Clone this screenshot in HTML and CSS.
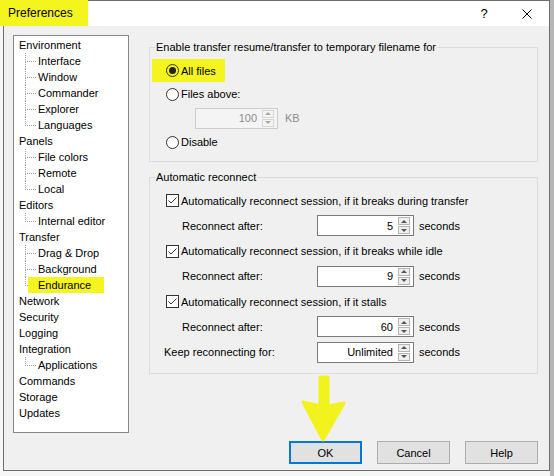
FILE: index.html
```html
<!DOCTYPE html>
<html lang="en">
<head>
    <meta charset="UTF-8">
    <title>Preferences</title>
    <link rel="stylesheet" href="styles.css">
</head>
<body>

<div class="window">
    <div class="titlebar">
        <span class="title mark">Preferences</span>
        <span class="title_help">?</span>
        <span class="title_close">
            <svg width="10" height="10" viewBox="0 0 10 10"><path d="M0.5 0.5 L9.5 9.5 M9.5 0.5 L0.5 9.5" stroke="#000" stroke-width="1" fill="none"/></svg>
        </span>
    </div>

    <div class="client">
        <div class="main">
            <!-- category tree -->
            <ul class="tree">
                <li><span class="tree_label">Environment</span>
                    <ul class="tree_children">
                        <li>Interface</li>
                        <li>Window</li>
                        <li>Commander</li>
                        <li>Explorer</li>
                        <li>Languages</li>
                    </ul>
                </li>
                <li><span class="tree_label">Panels</span>
                    <ul class="tree_children">
                        <li>File colors</li>
                        <li>Remote</li>
                        <li>Local</li>
                    </ul>
                </li>
                <li><span class="tree_label">Editors</span>
                    <ul class="tree_children">
                        <li>Internal editor</li>
                    </ul>
                </li>
                <li><span class="tree_label">Transfer</span>
                    <ul class="tree_children">
                        <li>Drag &amp; Drop</li>
                        <li>Background</li>
                        <li><span class="mark mark_tree">Endurance</span></li>
                    </ul>
                </li>
                <li><span class="tree_label">Network</span></li>
                <li><span class="tree_label">Security</span></li>
                <li><span class="tree_label">Logging</span></li>
                <li><span class="tree_label">Integration</span>
                    <ul class="tree_children">
                        <li>Applications</li>
                    </ul>
                </li>
                <li><span class="tree_label">Commands</span></li>
                <li><span class="tree_label">Storage</span></li>
                <li><span class="tree_label">Updates</span></li>
            </ul>

            <div class="pane">
                <!-- resume options -->
                <fieldset class="group">
                    <legend>Enable transfer resume/transfer to temporary filename for</legend>
                    <div class="group_body group_resume">
                        <div class="option">
                            <span class="mark mark_radio">
                                <svg class="radio" width="13" height="13" viewBox="0 0 13 13"><circle cx="6.5" cy="6.5" r="6" fill="none" stroke="#333"/><circle cx="6.5" cy="6.5" r="3.5" fill="#222"/></svg>
                                All files
                            </span>
                        </div>
                        <div class="option">
                            <svg class="radio" width="13" height="13" viewBox="0 0 13 13"><circle cx="6.5" cy="6.5" r="6" fill="#fff" stroke="#333"/></svg>
                            Files above:
                        </div>
                        <div class="option option_spin">
                            <div class="spin spin_disabled spin_small">
                                <span class="spin_value">100</span>
                                <span class="spin_btns"><i class="spin_up"></i><i class="spin_down"></i></span>
                            </div>
                            <span class="unit unit_disabled">KB</span>
                        </div>
                        <div class="option">
                            <svg class="radio" width="13" height="13" viewBox="0 0 13 13"><circle cx="6.5" cy="6.5" r="6" fill="#fff" stroke="#333"/></svg>
                            Disable
                        </div>
                    </div>
                </fieldset>

                <!-- reconnect options -->
                <fieldset class="group">
                    <legend>Automatic reconnect</legend>
                    <div class="group_body group_reconnect">
                        <div class="row row_check">
                            <svg class="check" width="13" height="13" viewBox="0 0 13 13"><rect x="0.5" y="0.5" width="12" height="12" fill="#fff" stroke="#333"/><path d="M2.5 6.5 L5 9 L10.5 3.5" fill="none" stroke="#333"/></svg>
                            Automatically reconnect session, if it breaks during transfer
                        </div>
                        <div class="row row_spin">
                            <span class="row_label row_label_sub">Reconnect after:</span>
                            <div class="spin">
                                <span class="spin_value">5</span>
                                <span class="spin_btns"><i class="spin_up"></i><i class="spin_down"></i></span>
                            </div>
                            <span class="unit">seconds</span>
                        </div>
                        <div class="row row_check">
                            <svg class="check" width="13" height="13" viewBox="0 0 13 13"><rect x="0.5" y="0.5" width="12" height="12" fill="#fff" stroke="#333"/><path d="M2.5 6.5 L5 9 L10.5 3.5" fill="none" stroke="#333"/></svg>
                            Automatically reconnect session, if it breaks while idle
                        </div>
                        <div class="row row_spin">
                            <span class="row_label row_label_sub">Reconnect after:</span>
                            <div class="spin">
                                <span class="spin_value">9</span>
                                <span class="spin_btns"><i class="spin_up"></i><i class="spin_down"></i></span>
                            </div>
                            <span class="unit">seconds</span>
                        </div>
                        <div class="row row_check">
                            <svg class="check" width="13" height="13" viewBox="0 0 13 13"><rect x="0.5" y="0.5" width="12" height="12" fill="#fff" stroke="#333"/><path d="M2.5 6.5 L5 9 L10.5 3.5" fill="none" stroke="#333"/></svg>
                            Automatically reconnect session, if it stalls
                        </div>
                        <div class="row row_spin">
                            <span class="row_label row_label_sub">Reconnect after:</span>
                            <div class="spin">
                                <span class="spin_value">60</span>
                                <span class="spin_btns"><i class="spin_up"></i><i class="spin_down"></i></span>
                            </div>
                            <span class="unit">seconds</span>
                        </div>
                        <div class="row row_spin">
                            <span class="row_label">Keep reconnecting for:</span>
                            <div class="spin">
                                <span class="spin_value">Unlimited</span>
                                <span class="spin_btns"><i class="spin_up"></i><i class="spin_down"></i></span>
                            </div>
                            <span class="unit">seconds</span>
                        </div>
                    </div>
                </fieldset>
            </div>
        </div>

        <div class="buttons">
            <a href="#" class="btn btn_default">OK</a>
            <a href="#" class="btn">Cancel</a>
            <a href="#" class="btn">Help</a>
        </div>
    </div>
</div>

<!-- hand drawn pointer over the OK button -->
<svg class="pointer" width="50" height="70" viewBox="0 0 50 70">
    <polygon points="20,3 28,3 28,32 44,29 23,66 3,28 20,32" fill="#f2f21c" stroke="#f2f21c" stroke-width="3" stroke-linejoin="round"/>
</svg>

</body>
</html>
```

FILE: styles.css
```css
*{
    margin: 0;
    padding: 0;
    box-sizing: border-box;
}
body{
    width: 554px;
    height: 476px;
    overflow: hidden;
    position: relative;
    background: linear-gradient(to right, #f6f6f6 550px, #b6b6b6 550px);
    font-family: "Liberation Sans", Arial, sans-serif;
    font-size: 11px;
    color: #000;
}
.window{
    width: 547px;
    height: 471px;
    margin-left: 3px;
    border: 1px solid #6e6e6e;
    background: #f0f0f0;
    display: flex;
    flex-direction: column;
}

/* highlighter marks */
.mark{
    background: #f4f41e;
    position: relative;
}

.titlebar{
    height: 25px;
    background: #fff;
    display: flex;
    align-items: center;
}
.title{
    height: 26px;
    line-height: 26px;
    margin: -1px 0 0 -4px;
    padding: 0 15px 0 8px;
    font-size: 12px;
    align-self: flex-start;
}
.title_help{
    margin-left: auto;
    width: 20px;
    text-align: center;
    font-size: 13px;
}
.title_close{
    width: 44px;
    margin-left: 11px;
    display: flex;
    justify-content: center;
}

.client{
    flex: 1;
    padding: 9px 11px 6px 9px;
    display: flex;
    flex-direction: column;
}
.main{
    height: 398px;
    display: flex;
    gap: 20px;
}

/* tree */
.tree{
    width: 116px;
    border: 1px solid #828790;
    background: #fff;
    padding: 1px 0 0 5px;
    list-style: none;
}
.tree li{
    line-height: 16px;
}
.tree_label{
    display: block;
    height: 16px;
}
.tree_children{
    list-style: none;
    margin-left: 6px;
}
.tree_children li{
    height: 16px;
    padding-left: 13px;
    position: relative;
}
.tree_children li::before{
    content: '';
    position: absolute;
    left: 0;
    top: 0;
    width: 10px;
    height: 8px;
    border-left: 1px dotted #a0a0a0;
    border-bottom: 1px dotted #a0a0a0;
}
.tree_children li:not(:last-child)::after{
    content: '';
    position: absolute;
    left: 0;
    top: 8px;
    bottom: 0;
    border-left: 1px dotted #a0a0a0;
}
.mark_tree{
    display: inline-block;
    height: 16px;
    margin-left: -10px;
    padding: 0 13px 0 10px;
}

/* right pane */
.pane{
    width: 389px;
    padding-top: 5px;
    display: flex;
    flex-direction: column;
    gap: 8px;
}
.group{
    border: 1px solid #dcdcdc;
    border-radius: 0;
}
.group legend{
    margin-left: 5px;
    padding: 0 1px;
    line-height: 14px;
}
.group_resume{
    padding: 4px 0 7px 16px;
}
.group_reconnect{
    padding: 4px 0 8px 14px;
}

.option{
    height: 24px;
    display: flex;
    align-items: center;
}
.option .radio{
    margin-right: 2px;
}
.mark_radio{
    display: flex;
    align-items: center;
    height: 23px;
    margin: 1px 0 0 -14px;
    padding: 0 9px 0 14px;
}
.option_spin{
    padding-left: 29px;
}

.row{
    display: flex;
    align-items: center;
}
.row_check{
    height: 25px;
    padding-left: 2px;
}
.row_spin{
    height: 25.5px;
}
.row_check .check{
    margin-right: 2px;
}
.row_label{
    width: 153px;
}
.row_label_sub{
    padding-left: 18px;
}
.unit{
    margin-left: 5px;
}
.unit_disabled{
    margin-left: 7px;
    color: #8c8c8c;
}

/* spin edit */
.spin{
    width: 97px;
    height: 21px;
    border: 1px solid #7a7a7a;
    background: #fff;
    display: flex;
    align-items: center;
}
.spin_small{
    width: 83px;
}
.spin_value{
    flex: 1;
    text-align: right;
    padding-right: 5px;
}
.spin_btns{
    width: 12px;
    height: 17px;
    margin-right: 3px;
    display: flex;
    flex-direction: column;
    gap: 1px;
}
.spin_up,
.spin_down{
    flex: 1;
    border: 1px solid #b4b4b4;
    background: #efefef;
    display: flex;
    align-items: center;
    justify-content: center;
}
.spin_up::before,
.spin_down::before{
    content: '';
    width: 0;
    height: 0;
    border-left: 3px solid transparent;
    border-right: 3px solid transparent;
}
.spin_up::before{
    border-bottom: 3px solid #555;
}
.spin_down::before{
    border-top: 3px solid #555;
}
.spin_disabled{
    border-color: #cccccc;
    background: #f4f4f4;
    color: #8c8c8c;
}
.spin_disabled .spin_up,
.spin_disabled .spin_down{
    border-color: #d6d6d6;
    background: #f4f4f4;
}
.spin_disabled .spin_up::before{
    border-bottom-color: #a8a8a8;
}
.spin_disabled .spin_down::before{
    border-top-color: #a8a8a8;
}

/* dialog buttons */
.buttons{
    margin-top: 8px;
    display: flex;
    justify-content: flex-end;
    gap: 15px;
}
.btn{
    width: 73px;
    height: 23px;
    border: 1px solid #adadad;
    background: #e1e1e1;
    color: #000;
    text-decoration: none;
    display: flex;
    align-items: center;
    justify-content: center;
}
.btn_default{
    border: 2px solid #0078d7;
}

.pointer{
    position: absolute;
    left: 300px;
    top: 374px;
}
```
